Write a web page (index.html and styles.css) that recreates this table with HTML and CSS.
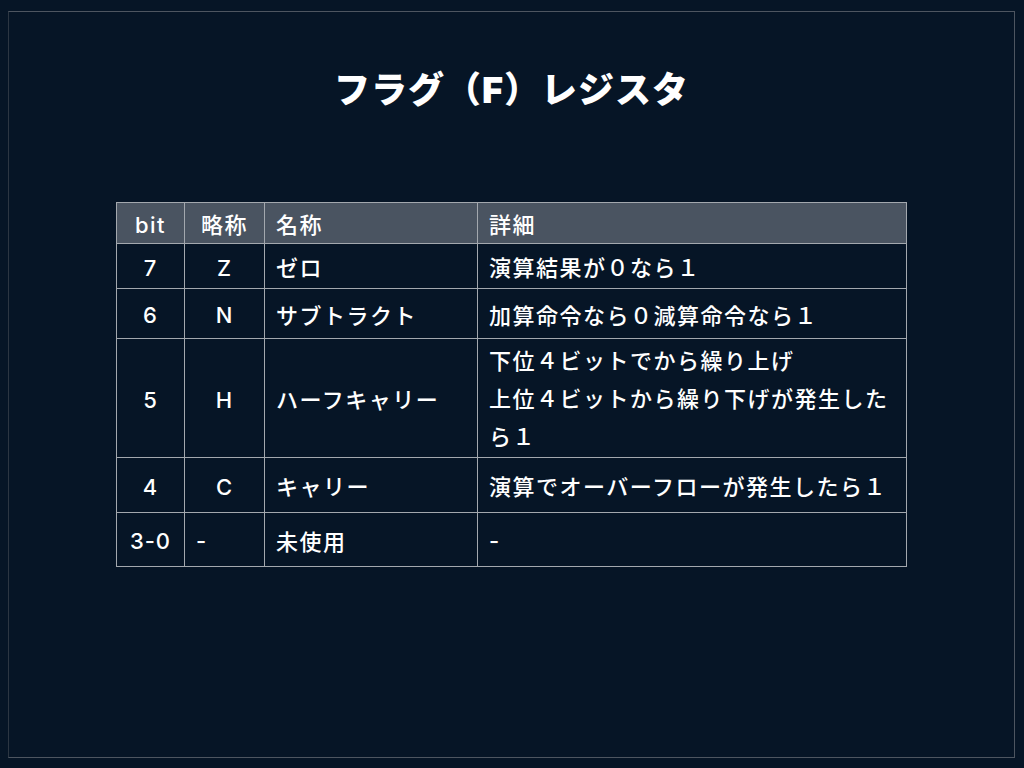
FILE: index.html
```html
<!DOCTYPE html>
<html lang="ja">
<head>
<meta charset="utf-8">
<title>フラグ（F）レジスタ</title>
<link rel="stylesheet" href="styles.css">
</head>
<body>
<div class="slide">
  <h1 class="title">フラグ（F）レジスタ</h1>
  <table class="flags">
    <colgroup>
      <col class="c-bit"><col class="c-abbr"><col class="c-name"><col class="c-desc">
    </colgroup>
    <thead>
      <tr class="r-head">
        <th class="center">bit</th>
        <th class="center">略称</th>
        <th>名称</th>
        <th>詳細</th>
      </tr>
    </thead>
    <tbody>
      <tr class="r1">
        <td class="center latin">7</td>
        <td class="center latin">Z</td>
        <td>ゼロ</td>
        <td>演算結果が０なら１</td>
      </tr>
      <tr class="r2">
        <td class="center latin">6</td>
        <td class="center latin">N</td>
        <td>サブトラクト</td>
        <td>加算命令なら０減算命令なら１</td>
      </tr>
      <tr class="r3">
        <td class="center latin">5</td>
        <td class="center latin">H</td>
        <td>ハーフキャリー</td>
        <td class="multi">下位４ビットでから繰り上げ<br>上位４ビットから繰り下げが発生した<br>ら１</td>
      </tr>
      <tr class="r4">
        <td class="center latin">4</td>
        <td class="center latin">C</td>
        <td>キャリー</td>
        <td>演算でオーバーフローが発生したら１</td>
      </tr>
      <tr class="r5">
        <td class="center latin">3-0</td>
        <td class="latin">-</td>
        <td>未使用</td>
        <td class="latin">-</td>
      </tr>
    </tbody>
  </table>
</div>
</body>
</html>
```

FILE: styles.css
```css
html, body {
  margin: 0;
  padding: 0;
  background: #061526;
}
body {
  width: 1024px;
  height: 768px;
  overflow: hidden;
  font-family: Inter, "Noto Sans CJK JP", sans-serif;
  color: #ffffff;
}
.slide {
  box-sizing: border-box;
  margin: 11px 9px 0 8px;
  width: 1007px;
  height: 747px;
  border: 1px solid #4d5560;
  border-left-color: #2c3642;
  display: flex;
  flex-direction: column;
  align-items: center;
  padding-top: 56px;
}
.title {
  margin: 0;
  font-size: 36px;
  line-height: 44px;
  font-weight: 900;
  letter-spacing: 1px;
}
.flags {
  margin-top: 90px;
  width: 790px;
  border-collapse: collapse;
  table-layout: fixed;
  font-size: 22px;
  letter-spacing: 1.5px;
}
.c-bit { width: 68px; }
.c-abbr { width: 80px; }
.c-name { width: 213px; }
.c-desc { width: 429px; }
.flags th, .flags td {
  border: 1px solid #a3a8ae;
  padding: 0 11px;
  text-align: left;
  font-weight: 500;
  white-space: nowrap;
  vertical-align: middle;
}
.flags th {
  background: #4a5461;
}
.flags .center {
  text-align: center;
  padding-left: 0;
  padding-right: 0;
}
.flags .latin {
  padding-top: 3px;
  letter-spacing: 1px;
}
.flags th.center:first-child {
  padding-top: 3px;
}
.flags td.multi {
  line-height: 38px;
  padding-top: 2px;
}
.r-head { height: 41px; }
.r1 { height: 45px; }
.r2 { height: 50px; }
.r3 { height: 119px; }
.r4 { height: 55px; }
.r5 { height: 54px; }
```
